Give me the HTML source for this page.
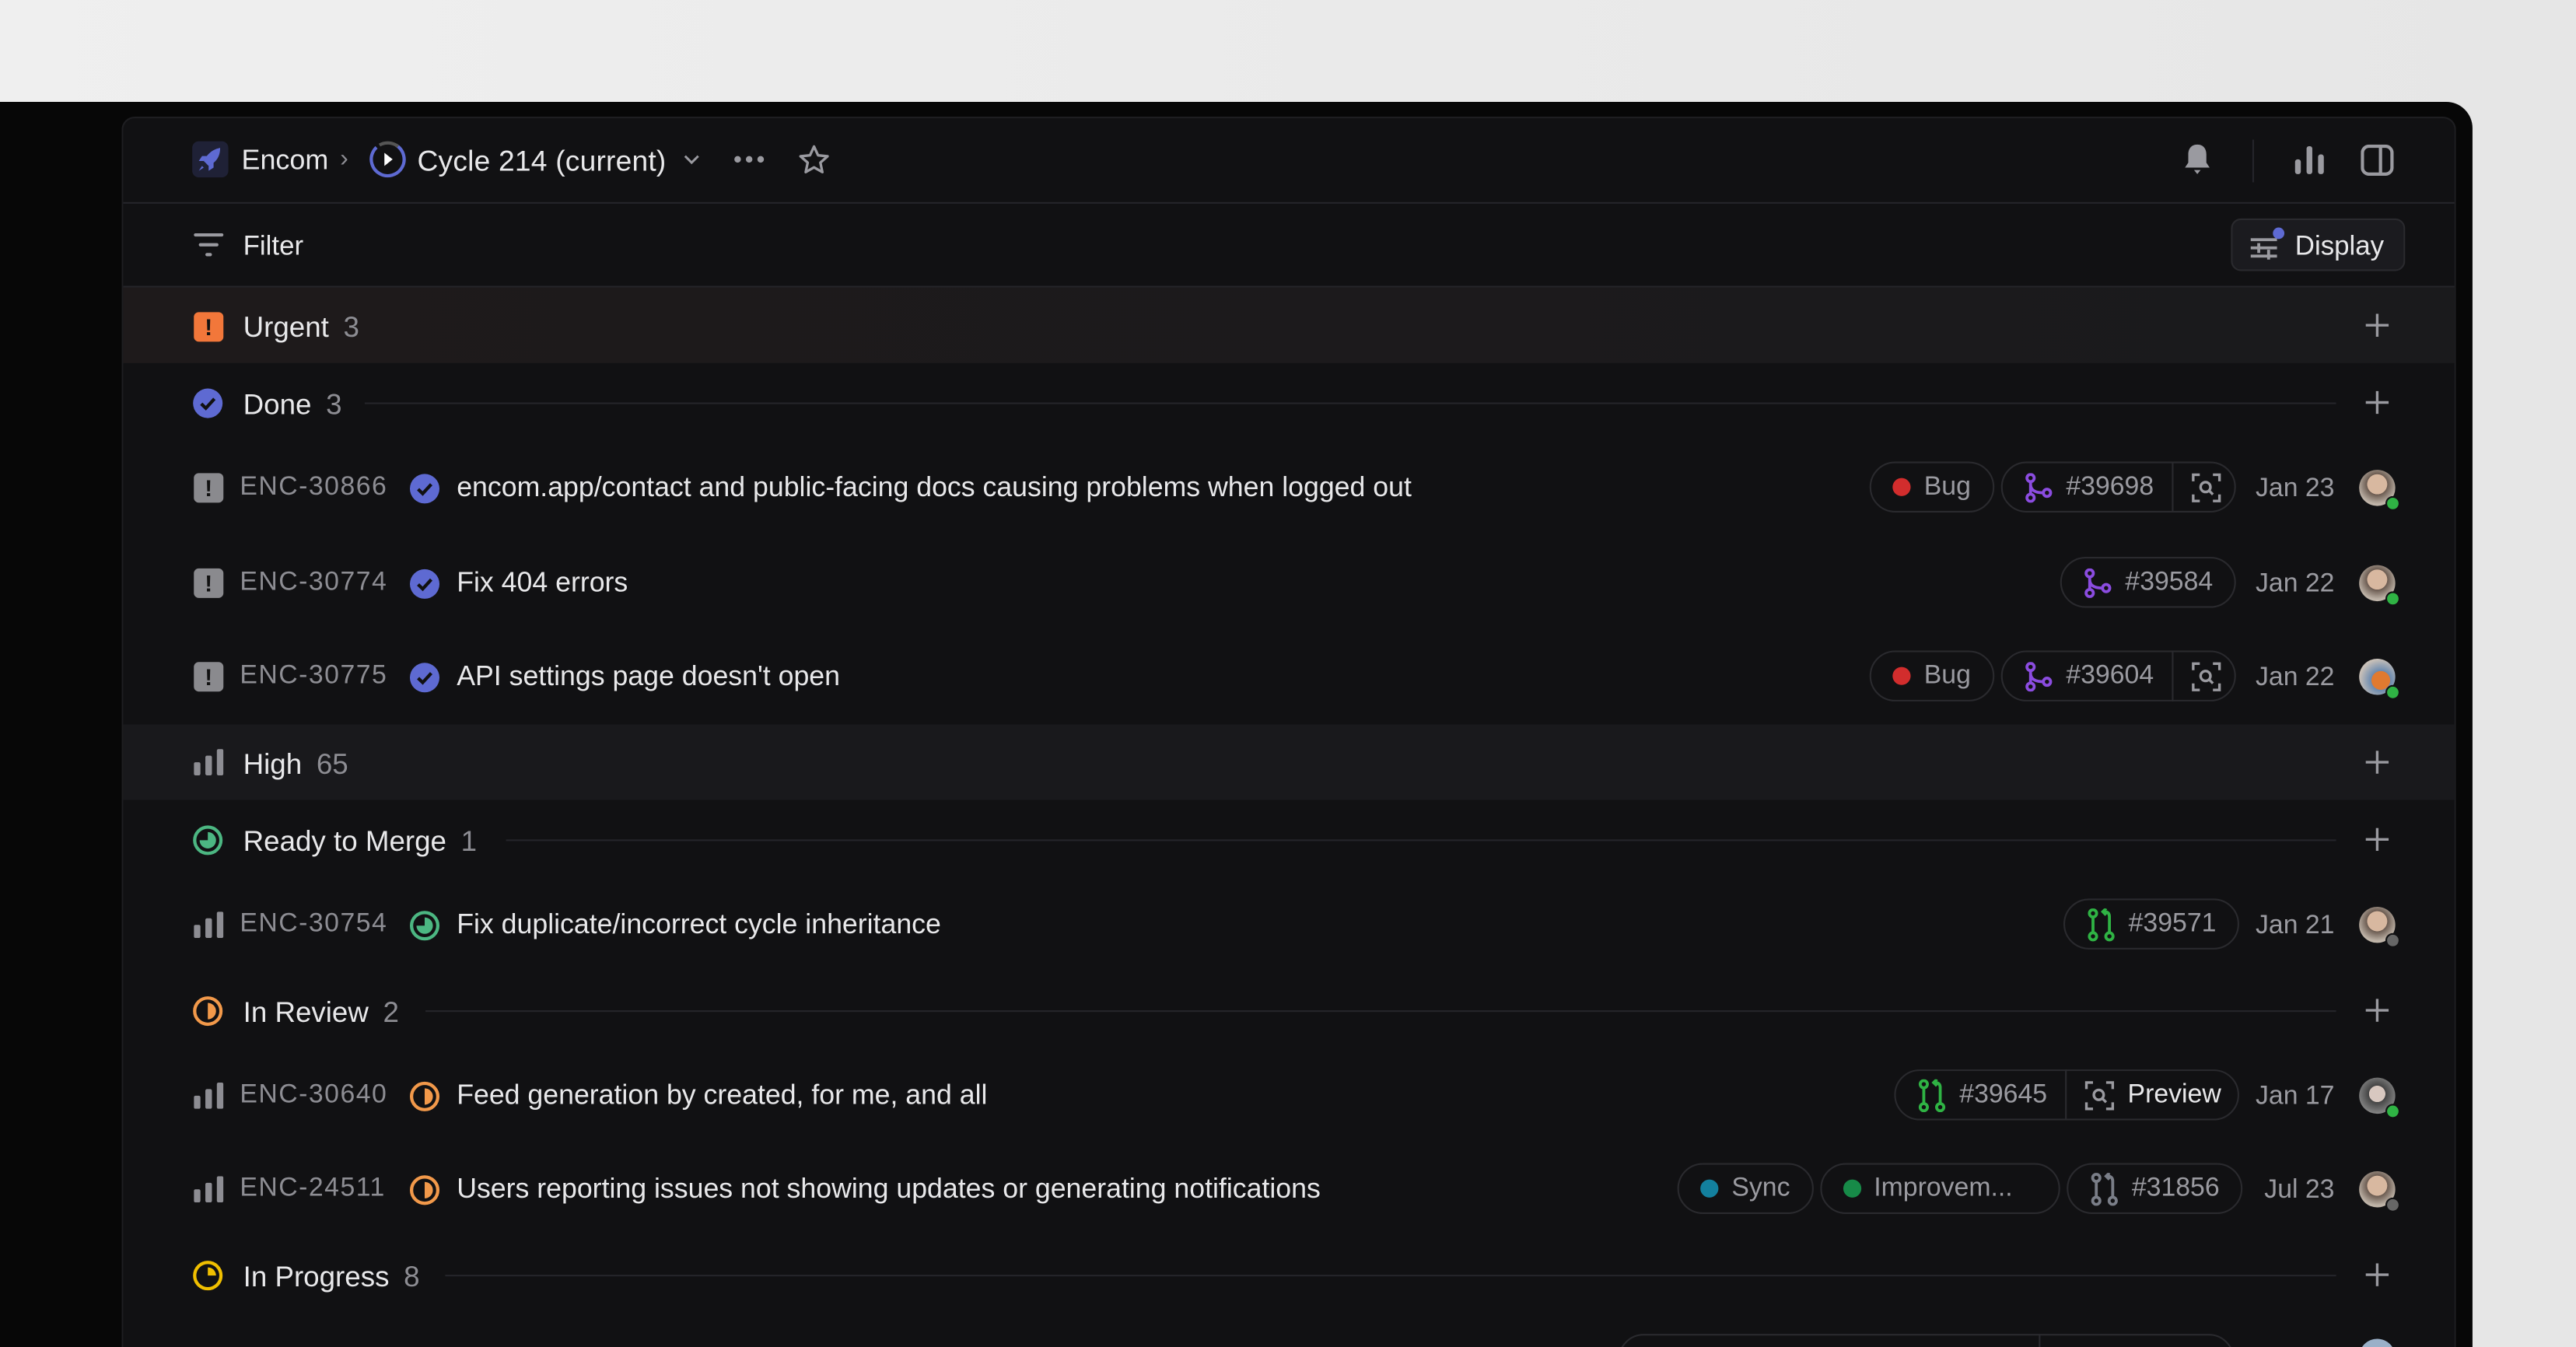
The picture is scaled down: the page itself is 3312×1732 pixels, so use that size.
<!DOCTYPE html>
<html><head><meta charset="utf-8"><style>
*{margin:0;padding:0;box-sizing:border-box}
html,body{width:3312px;height:1732px;overflow:hidden;background:#ebebeb}
#w{position:absolute;left:0;top:0;width:1568px;height:820px;overflow:hidden;transform:scale(2.11224);transform-origin:0 0;font-family:"Liberation Sans",sans-serif;background:linear-gradient(90deg,#efefef,#e6e6e6)}
.frame{position:absolute;left:0;top:62px;width:1505px;height:758px;background:#070707;border-top-right-radius:16px}
.panel{position:absolute;left:74px;top:71px;width:1421px;height:749px;background:#111113;border:1px solid #1e1e21;border-bottom:none;border-radius:8px 8px 0 0}
.a{position:absolute}
.t{position:absolute;color:#e8e8ea;font-size:16.9px;white-space:nowrap;line-height:20px}
.id{letter-spacing:0.7px}
.g{color:#8d8d93}
.hl{position:absolute;height:1px;background:#25252a}
.plus{position:absolute;left:1440px;width:14px;height:14px}
.chips{position:absolute;display:flex;gap:4px;align-items:center;right:142px}
.chip{height:31px;border:1px solid #2a2a2e;border-radius:16px;display:flex;align-items:center;padding:0 13px;color:#9a9aa0;font-size:16px;gap:8px}
.dot{width:11px;height:11px;border-radius:50%}
.sep{width:1px;height:31px;background:#2a2a2e;margin:0 3px}
.date{position:absolute;color:#9a9aa0;font-size:16px;line-height:20px;right:147px}
.av{position:absolute;left:1436px;width:22px;height:22px;border-radius:50%;background:radial-gradient(circle at 50% 40%,#d8b8a0 0 35%,#6a5a50 36%,#bfb4a8 70%)}
.av i{position:absolute;right:-3px;bottom:-3px;width:9px;height:9px;border-radius:50%;background:#2fb344;border:1.5px solid #111113}
</style></head><body><div id="w">
<div class="frame"></div>
<div class="panel"></div>

<div class="a" style="left:117px;top:86px;width:22px;height:22px;border-radius:4px;background:#1f2136"></div>
<svg class="a" style="left:119px;top:88px" width="18" height="18" viewBox="0 0 18 18"><path d="M15 2 C10 3 7 6 5 10 L8 13 C12 11 15 8 15 2Z" fill="#5e6ad2"/><path d="M5 10 L2 10 L4 7 L7 7Z M8 13 L8 16 L11 14 L11 11Z" fill="#5e6ad2"/><path d="M4 13 L2 16 L5 14Z" fill="#5e6ad2"/></svg>
<div class="t" style="left:147px;top:88px;font-size:17px">Encom</div>
<div class="t g" style="left:207px;top:87px;font-size:15px">›</div>
<svg class="a" style="left:224px;top:85px" width="24" height="24" viewBox="0 0 24 24"><circle cx="12" cy="12" r="10" fill="none" stroke="#5e6ad2" stroke-width="2" stroke-dasharray="50 13" transform="rotate(-60 12 12)"/><circle cx="12" cy="12" r="10" fill="none" stroke="#555" stroke-width="2" stroke-dasharray="12 51" transform="rotate(-120 12 12)"/><path d="M10 8 L15 12 L10 16Z" fill="#fff"/></svg>
<div class="t" style="left:254px;top:88px;font-size:17.6px;letter-spacing:0.1px">Cycle 214 (current)</div>
<svg class="a" style="left:415px;top:92px" width="12" height="10" viewBox="0 0 12 10"><path d="M2 3 L6 7 L10 3" stroke="#9a9aa0" stroke-width="1.4" fill="none"/></svg>
<svg class="a" style="left:446px;top:93px" width="20" height="8"><circle cx="3" cy="4" r="2" fill="#9a9aa0"/><circle cx="10" cy="4" r="2" fill="#9a9aa0"/><circle cx="17" cy="4" r="2" fill="#9a9aa0"/></svg>
<svg class="a" style="left:485px;top:87px" width="21" height="21" viewBox="0 0 24 24"><path d="M12 2.5 L14.8 8.6 L21.4 9.3 L16.4 13.7 L17.8 20.3 L12 17 L6.2 20.3 L7.6 13.7 L2.6 9.3 L9.2 8.6Z" fill="none" stroke="#9a9aa0" stroke-width="1.8" stroke-linejoin="round"/></svg>
<svg class="a" style="left:1328px;top:87px" width="19" height="20" viewBox="0 0 19 20"><path d="M9.5 1 C5.5 1 4 4 4 7 L4 12 L2 15 L17 15 L15 12 L15 7 C15 4 13.5 1 9.5 1Z" fill="#9a9aa0"/><path d="M7.5 16.5 L11.5 16.5 L9.5 19Z" fill="#9a9aa0"/></svg>
<div class="a" style="left:1371px;top:85px;width:1px;height:26px;background:#25252a"></div>
<svg class="a" style="left:1396px;top:87px" width="20" height="20"><rect x="1" y="10" width="3.5" height="9" rx="1.5" fill="#9a9aa0"/><rect x="8" y="2" width="3.5" height="17" rx="1.5" fill="#9a9aa0"/><rect x="15" y="7" width="3.5" height="12" rx="1.5" fill="#9a9aa0"/></svg>
<svg class="a" style="left:1437px;top:88px" width="20" height="19"><rect x="1" y="1" width="18" height="17" rx="4" fill="none" stroke="#9a9aa0" stroke-width="2"/><rect x="11" y="1" width="2" height="17" fill="#9a9aa0"/></svg>
<div class="hl" style="left:75px;top:123px;width:1419px"></div>

<svg class="a" style="left:117px;top:141px" width="20" height="16"><rect x="1" y="1" width="18" height="2" rx="1" fill="#9a9aa0"/><rect x="4" y="7" width="12" height="2" rx="1" fill="#9a9aa0"/><rect x="8" y="13" width="4" height="2" rx="1" fill="#9a9aa0"/></svg>
<div class="t" style="left:148px;top:140px;font-size:16.5px">Filter</div>
<div class="a" style="left:1358px;top:133px;width:106px;height:32px;border:1px solid #2a2a2e;border-radius:6px;background:#1b1b1f"></div>
<svg class="a" style="left:1369px;top:138px" width="24" height="22"><rect x="1" y="7" width="16" height="1.8" fill="#9a9aa0"/><rect x="1" y="12" width="16" height="1.8" fill="#9a9aa0"/><rect x="1" y="17" width="16" height="1.8" fill="#9a9aa0"/><rect x="5" y="10" width="1.8" height="6" fill="#9a9aa0"/><rect x="11" y="14" width="1.8" height="6" fill="#9a9aa0"/><circle cx="18" cy="4" r="3.5" fill="#5e6ad2"/></svg>
<div class="t" style="left:1397px;top:140px;font-size:16.5px">Display</div>
<div class="hl" style="left:75px;top:174px;width:1419px"></div>

<div class="a" style="left:75px;top:175px;width:1419px;height:46px;background:linear-gradient(90deg,#1e1a1b,#1a1a1c)"></div>
<div class="a" style="left:118px;top:190px;width:18px;height:18px;border-radius:3px;background:#f2773a;color:#111;font-weight:bold;font-size:14px;text-align:center;line-height:18px">!</div>
<div class="t" style="left:148px;top:189px;font-size:17.4px">Urgent <span class="g" style="margin-left:4px">3</span></div>
<svg class="plus" style="top:191px"><path d="M7 0V14M0 7H14" stroke="#9a9aa0" stroke-width="1.6"/></svg>

<svg class="a" style="left:117px;top:236px" width="19" height="19"><circle cx="9.5" cy="9.5" r="9" fill="#5e6ad2"/><path d="M5.5 9.8 L8.3 12.5 L13.5 6.8" stroke="#111" stroke-width="2" fill="none"/></svg>
<div class="t" style="left:148px;top:236px;font-size:17.4px">Done <span class="g" style="margin-left:4px">3</span></div>
<div class="hl" style="left:222px;top:245px;width:1200px"></div>
<svg class="plus" style="top:238px"><path d="M7 0V14M0 7H14" stroke="#9a9aa0" stroke-width="1.6"/></svg>

<div class="a" style="left:118px;top:288px;width:18px;height:18px;border-radius:3px;background:#8a8a8e;color:#111;font-weight:bold;font-size:14px;text-align:center;line-height:18px">!</div>
<div class="t g id" style="left:146px;top:287px;font-size:16px">ENC-30866</div>
<svg class="a" style="left:249px;top:288px" width="19" height="19"><circle cx="9.5" cy="9.5" r="9" fill="#5e6ad2"/><path d="M5.5 9.8 L8.3 12.5 L13.5 6.8" stroke="#111" stroke-width="2" fill="none"/></svg>
<div class="t" style="left:278px;top:287px">encom.app/contact and public-facing docs causing problems when logged out</div>
<div class="chips" style="top:281px;right:207px">
 <div class="chip"><span class="dot" style="background:#d22d2d"></span>Bug</div>
 <div class="chip" style="padding-right:8px"><svg width="18" height="18"><circle cx="4" cy="3" r="2.2" fill="none" stroke="#8b4ce0" stroke-width="1.8"/><circle cx="4" cy="15" r="2.2" fill="none" stroke="#8b4ce0" stroke-width="1.8"/><circle cx="14" cy="12" r="2.2" fill="none" stroke="#8b4ce0" stroke-width="1.8"/><path d="M4 5V13M4 7 C4 11 8 12 12 12" stroke="#8b4ce0" stroke-width="1.8" fill="none"/></svg>#39698<span class="sep"></span><svg width="18" height="18"><path d="M1 5V1H5M13 1H17V5M17 13V17H13M5 17H1V13" stroke="#9a9aa0" stroke-width="1.6" fill="none"/><circle cx="8.5" cy="8.5" r="3" stroke="#9a9aa0" stroke-width="1.6" fill="none"/><path d="M10.5 10.5L13 13" stroke="#9a9aa0" stroke-width="1.6"/></svg></div>
</div>
<div class="date" style="top:288px">Jan 23</div>
<div class="av" style="top:286px"><i></i></div>

<div class="a" style="left:118px;top:346px;width:18px;height:18px;border-radius:3px;background:#8a8a8e;color:#111;font-weight:bold;font-size:14px;text-align:center;line-height:18px">!</div>
<div class="t g id" style="left:146px;top:345px;font-size:16px">ENC-30774</div>
<svg class="a" style="left:249px;top:346px" width="19" height="19"><circle cx="9.5" cy="9.5" r="9" fill="#5e6ad2"/><path d="M5.5 9.8 L8.3 12.5 L13.5 6.8" stroke="#111" stroke-width="2" fill="none"/></svg>
<div class="t" style="left:278px;top:345px">Fix 404 errors</div>
<div class="chips" style="top:339px;right:207px">
 <div class="chip"><svg width="18" height="18"><circle cx="4" cy="3" r="2.2" fill="none" stroke="#8b4ce0" stroke-width="1.8"/><circle cx="4" cy="15" r="2.2" fill="none" stroke="#8b4ce0" stroke-width="1.8"/><circle cx="14" cy="12" r="2.2" fill="none" stroke="#8b4ce0" stroke-width="1.8"/><path d="M4 5V13M4 7 C4 11 8 12 12 12" stroke="#8b4ce0" stroke-width="1.8" fill="none"/></svg>#39584</div>
</div>
<div class="date" style="top:346px">Jan 22</div>
<div class="av" style="top:344px"><i></i></div>

<div class="a" style="left:118px;top:403px;width:18px;height:18px;border-radius:3px;background:#8a8a8e;color:#111;font-weight:bold;font-size:14px;text-align:center;line-height:18px">!</div>
<div class="t g id" style="left:146px;top:402px;font-size:16px">ENC-30775</div>
<svg class="a" style="left:249px;top:403px" width="19" height="19"><circle cx="9.5" cy="9.5" r="9" fill="#5e6ad2"/><path d="M5.5 9.8 L8.3 12.5 L13.5 6.8" stroke="#111" stroke-width="2" fill="none"/></svg>
<div class="t" style="left:278px;top:402px">API settings page doesn't open</div>
<div class="chips" style="top:396px;right:207px">
 <div class="chip"><span class="dot" style="background:#d22d2d"></span>Bug</div>
 <div class="chip" style="padding-right:8px"><svg width="18" height="18"><circle cx="4" cy="3" r="2.2" fill="none" stroke="#8b4ce0" stroke-width="1.8"/><circle cx="4" cy="15" r="2.2" fill="none" stroke="#8b4ce0" stroke-width="1.8"/><circle cx="14" cy="12" r="2.2" fill="none" stroke="#8b4ce0" stroke-width="1.8"/><path d="M4 5V13M4 7 C4 11 8 12 12 12" stroke="#8b4ce0" stroke-width="1.8" fill="none"/></svg>#39604<span class="sep"></span><svg width="18" height="18"><path d="M1 5V1H5M13 1H17V5M17 13V17H13M5 17H1V13" stroke="#9a9aa0" stroke-width="1.6" fill="none"/><circle cx="8.5" cy="8.5" r="3" stroke="#9a9aa0" stroke-width="1.6" fill="none"/><path d="M10.5 10.5L13 13" stroke="#9a9aa0" stroke-width="1.6"/></svg></div>
</div>
<div class="date" style="top:403px">Jan 22</div>
<div class="av" style="top:401px;background:radial-gradient(circle at 60% 60%,#e07a30 0 30%,#6a8ab0 31%,#c8c0b8 70%)"><i></i></div>

<div class="a" style="left:75px;top:441px;width:1419px;height:46px;background:#19191c"></div>
<svg class="a" style="left:118px;top:456px" width="18" height="16"><rect x="0" y="8" width="4" height="8" rx="1" fill="#8d8d93"/><rect x="7" y="4" width="4" height="12" rx="1" fill="#8d8d93"/><rect x="14" y="0" width="4" height="16" rx="1" fill="#8d8d93"/></svg>
<div class="t" style="left:148px;top:455px;font-size:17.4px">High <span class="g" style="margin-left:4px">65</span></div>
<svg class="plus" style="top:457px"><path d="M7 0V14M0 7H14" stroke="#9a9aa0" stroke-width="1.6"/></svg>

<svg class="a" style="left:117px;top:502px" width="19" height="19"><circle cx="9.5" cy="9.5" r="8" fill="none" stroke="#4cb782" stroke-width="2"/><path d="M9.5 9.5 L9.5 4.5 A5 5 0 1 1 4.5 9.5Z" fill="#4cb782"/></svg>
<div class="t" style="left:148px;top:502px;font-size:17.4px">Ready to Merge <span class="g" style="margin-left:4px">1</span></div>
<div class="hl" style="left:308px;top:511px;width:1114px"></div>
<svg class="plus" style="top:504px"><path d="M7 0V14M0 7H14" stroke="#9a9aa0" stroke-width="1.6"/></svg>

<svg class="a" style="left:118px;top:555px" width="18" height="16"><rect x="0" y="8" width="4" height="8" rx="1" fill="#8d8d93"/><rect x="7" y="4" width="4" height="12" rx="1" fill="#8d8d93"/><rect x="14" y="0" width="4" height="16" rx="1" fill="#8d8d93"/></svg>
<div class="t g id" style="left:146px;top:553px;font-size:16px">ENC-30754</div>
<svg class="a" style="left:249px;top:554px" width="19" height="19"><circle cx="9.5" cy="9.5" r="8" fill="none" stroke="#4cb782" stroke-width="2"/><path d="M9.5 9.5 L9.5 4.5 A5 5 0 1 1 4.5 9.5Z" fill="#4cb782"/></svg>
<div class="t" style="left:278px;top:553px">Fix duplicate/incorrect cycle inheritance</div>
<div class="chips" style="top:547px;right:205px">
 <div class="chip"><svg width="18" height="20"><circle cx="4" cy="3" r="2.2" fill="none" stroke="#2fb344" stroke-width="1.8"/><circle cx="4" cy="17" r="2.2" fill="none" stroke="#2fb344" stroke-width="1.8"/><circle cx="14" cy="17" r="2.2" fill="none" stroke="#2fb344" stroke-width="1.8"/><path d="M4 5V15M14 15V5 Q14 2 11 2M12 0L10 2L12 4" stroke="#2fb344" stroke-width="1.8" fill="none"/></svg>#39571</div>
</div>
<div class="date" style="top:554px">Jan 21</div>
<div class="av" style="top:552px"><i style="background:#666"></i></div>

<svg class="a" style="left:117px;top:606px" width="19" height="19"><circle cx="9.5" cy="9.5" r="8" fill="none" stroke="#f2994a" stroke-width="2"/><path d="M9.5 4.5 A5 5 0 0 1 9.5 14.5Z" fill="#f2994a"/></svg>
<div class="t" style="left:148px;top:606px;font-size:17.4px">In Review <span class="g" style="margin-left:4px">2</span></div>
<div class="hl" style="left:259px;top:615px;width:1163px"></div>
<svg class="plus" style="top:608px"><path d="M7 0V14M0 7H14" stroke="#9a9aa0" stroke-width="1.6"/></svg>

<svg class="a" style="left:118px;top:659px" width="18" height="16"><rect x="0" y="8" width="4" height="8" rx="1" fill="#8d8d93"/><rect x="7" y="4" width="4" height="12" rx="1" fill="#8d8d93"/><rect x="14" y="0" width="4" height="16" rx="1" fill="#8d8d93"/></svg>
<div class="t g id" style="left:146px;top:657px;font-size:16px">ENC-30640</div>
<svg class="a" style="left:249px;top:658px" width="19" height="19"><circle cx="9.5" cy="9.5" r="8" fill="none" stroke="#f2994a" stroke-width="2"/><path d="M9.5 4.5 A5 5 0 0 1 9.5 14.5Z" fill="#f2994a"/></svg>
<div class="t" style="left:278px;top:657px">Feed generation by created, for me, and all</div>
<div class="chips" style="top:651px;right:205px">
 <div class="chip" style="padding-right:10px"><svg width="18" height="20"><circle cx="4" cy="3" r="2.2" fill="none" stroke="#2fb344" stroke-width="1.8"/><circle cx="4" cy="17" r="2.2" fill="none" stroke="#2fb344" stroke-width="1.8"/><circle cx="14" cy="17" r="2.2" fill="none" stroke="#2fb344" stroke-width="1.8"/><path d="M4 5V15M14 15V5 Q14 2 11 2M12 0L10 2L12 4" stroke="#2fb344" stroke-width="1.8" fill="none"/></svg>#39645<span class="sep"></span><svg width="18" height="18"><path d="M1 5V1H5M13 1H17V5M17 13V17H13M5 17H1V13" stroke="#9a9aa0" stroke-width="1.6" fill="none"/><circle cx="8.5" cy="8.5" r="3" stroke="#9a9aa0" stroke-width="1.6" fill="none"/><path d="M10.5 10.5L13 13" stroke="#9a9aa0" stroke-width="1.6"/></svg><span style="color:#e8e8ea">Preview</span></div>
</div>
<div class="date" style="top:658px">Jan 17</div>
<div class="av" style="top:656px;background:radial-gradient(circle at 50% 45%,#d8c8c0 0 30%,#444 31%,#888 75%)"><i></i></div>

<svg class="a" style="left:118px;top:716px" width="18" height="16"><rect x="0" y="8" width="4" height="8" rx="1" fill="#8d8d93"/><rect x="7" y="4" width="4" height="12" rx="1" fill="#8d8d93"/><rect x="14" y="0" width="4" height="16" rx="1" fill="#8d8d93"/></svg>
<div class="t g id" style="left:146px;top:714px;font-size:16px">ENC-24511</div>
<svg class="a" style="left:249px;top:715px" width="19" height="19"><circle cx="9.5" cy="9.5" r="8" fill="none" stroke="#f2994a" stroke-width="2"/><path d="M9.5 4.5 A5 5 0 0 1 9.5 14.5Z" fill="#f2994a"/></svg>
<div class="t" style="left:278px;top:714px">Users reporting issues not showing updates or generating notifications</div>
<div class="chips" style="top:708px;right:203px">
 <div class="chip"><span class="dot" style="background:#13809e"></span>Sync</div>
 <div class="chip" style="width:146px"><span class="dot" style="background:#178a48"></span>Improvem...</div>
 <div class="chip"><svg width="18" height="20"><circle cx="4" cy="3" r="2.2" fill="none" stroke="#7a7e88" stroke-width="1.8"/><circle cx="4" cy="17" r="2.2" fill="none" stroke="#7a7e88" stroke-width="1.8"/><circle cx="14" cy="17" r="2.2" fill="none" stroke="#7a7e88" stroke-width="1.8"/><path d="M4 5V15M14 15V5 Q14 2 11 2M12 0L10 2L12 4" stroke="#7a7e88" stroke-width="1.8" fill="none"/></svg>#31856</div>
</div>
<div class="date" style="top:715px">Jul 23</div>
<div class="av" style="top:713px"><i style="background:#666"></i></div>

<svg class="a" style="left:117px;top:767px" width="19" height="19"><circle cx="9.5" cy="9.5" r="8" fill="none" stroke="#f0bf00" stroke-width="2"/><path d="M9.5 9.5 L9.5 4.5 A5 5 0 0 1 14.5 9.5Z" fill="#f0bf00"/></svg>
<div class="t" style="left:148px;top:767px;font-size:17.4px">In Progress <span class="g" style="margin-left:4px">8</span></div>
<div class="hl" style="left:271px;top:776px;width:1151px"></div>
<svg class="plus" style="top:769px"><path d="M7 0V14M0 7H14" stroke="#9a9aa0" stroke-width="1.6"/></svg>

<div class="a" style="left:985px;top:812px;width:375px;height:31px;border:1px solid #2a2a2e;border-radius:16px"></div>
<div class="a" style="left:1241px;top:812px;width:1px;height:10px;background:#2a2a2e"></div>
<div class="av" style="top:815px;background:#9ab0c8"></div>
</div></body></html>
